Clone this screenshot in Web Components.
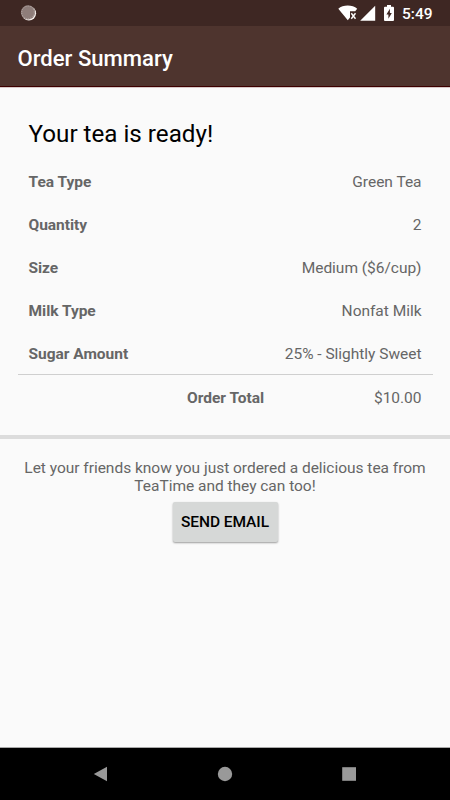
<!DOCTYPE html>
<html lang="en">
<head>
<meta charset="utf-8">
<title>Order Summary</title>
<style>
    body {
        margin: 0;
        background: #fafafa;
        font-family: Roboto, sans-serif;
    }
</style>
</head>
<body>
<tea-screen>
    <status-bar slot="top" time="5:49"></status-bar>
    <app-bar slot="top">Order Summary</app-bar>
    <order-summary heading="Your tea is ready!">
        <order-row label="Tea Type">Green Tea</order-row>
        <order-row label="Quantity">2</order-row>
        <order-row label="Size">Medium ($6/cup)</order-row>
        <order-row label="Milk Type">Nonfat Milk</order-row>
        <order-row label="Sugar Amount">25% - Slightly Sweet</order-row>
        <order-row slot="total" total label="Order Total">$10.00</order-row>
    </order-summary>
    <share-panel action="Send Email">Let your friends know you just ordered a delicious tea from TeaTime and they can too!</share-panel>
    <nav-bar slot="bottom"></nav-bar>
</tea-screen>

<script>
class TeaScreen extends HTMLElement {
    constructor() {
        super();
        this.attachShadow({ mode: 'open' }).innerHTML = `
          <style>
            :host {
                display: flex;
                flex-direction: column;
                height: 800px;
                overflow: hidden;
            }
            main {
                flex: 1;
            }
          </style>
          <slot name="top"></slot>
          <main><slot></slot></main>
          <slot name="bottom"></slot>
        `;
    }
}

class StatusBar extends HTMLElement {
    constructor() {
        super();
        this.attachShadow({ mode: 'open' }).innerHTML = `
          <style>
            :host {
                display: flex;
                align-items: center;
                justify-content: space-between;
                box-sizing: border-box;
                height: 26px;
                padding: 0 17.5px 0 20px;
                background: #3e2723;
                color: #fff;
            }
            svg {
                display: block;
            }
            .system {
                display: flex;
                align-items: center;
            }
            .time {
                margin-left: 7px;
                font-size: 15.5px;
                font-weight: 500;
                line-height: 26px;
                padding-top: 2px;
            }
          </style>
          <svg width="17" height="18" viewBox="0 0 17 18">
            <circle cx="8.9" cy="9.3" r="7.2" fill="#f6f0ed"/>
            <circle cx="8" cy="8.4" r="7.1" fill="#8e7d7a"/>
            <circle cx="8" cy="8.4" r="6.3" fill="none" stroke="#b9aeab" stroke-width="1" stroke-dasharray="1 1.2"/>
          </svg>
          <div class="system">
            <svg width="57" height="26" viewBox="338 0 57 26" fill="#fff">
              <path d="M338.3 8.8C343 4.4 352.5 4.4 357.2 8.8L355.2 11.3H350V17.5L347.8 20.2Z"/>
              <path d="M351.3 13.3L355.5 18.7M355.5 13.3L351.3 18.7" stroke="#fff" stroke-width="1.4"/>
              <path d="M375.2 5.7V20.7H360.2Z"/>
              <path fill-rule="evenodd" d="M387 5H391V6.7H393Q394 6.7 394 7.7V20Q394 21 393 21H385Q384 21 384 20V7.7Q384 6.7 385 6.7H387ZM389.9 8.8L386.4 14.4H388.4V18.8L391.8 13.1H389.9Z"/>
            </svg>
            <span class="time">${this.getAttribute('time')}</span>
          </div>
        `;
    }
}

class AppBar extends HTMLElement {
    constructor() {
        super();
        this.attachShadow({ mode: 'open' }).innerHTML = `
          <style>
            :host {
                display: flex;
                align-items: center;
                box-sizing: border-box;
                height: 62px;
                padding: 2px 17.5px 0;
                border-bottom: 1px solid #d8c8c8;
                background: #4e342e;
                box-shadow: inset 0 -1px #3c0000;
                color: #fff;
                font-size: 22.1px;
                font-weight: 500;
            }
          </style>
          <slot></slot>
        `;
    }
}

class OrderSummary extends HTMLElement {
    constructor() {
        super();
        this.attachShadow({ mode: 'open' }).innerHTML = `
          <style>
            :host {
                display: block;
                padding: 26px 17.5px 17px;
                border-bottom: 4px solid #dcdcdc;
            }
            h1 {
                margin: 0;
                padding-left: 11px;
                color: #000;
                font-size: 24.2px;
                font-weight: 400;
                line-height: 40px;
                height: 34px;
            }
            .rows {
                margin-top: 11px;
                border-bottom: 1px solid #cfcfcf;
            }
          </style>
          <h1>${this.getAttribute('heading')}</h1>
          <div class="rows"><slot></slot></div>
          <slot name="total"></slot>
        `;
    }
}

class OrderRow extends HTMLElement {
    constructor() {
        super();
        this.attachShadow({ mode: 'open' }).innerHTML = `
          <style>
            :host {
                display: grid;
                grid-template-columns: auto 1fr;
                align-items: center;
                box-sizing: border-box;
                height: 43px;
                padding: 3px 11px 0;
                color: #666;
                font-size: 15.5px;
                letter-spacing: -.02px;
            }
            :host([total]) {
                grid-template-columns: 1fr 157.5px;
            }
            :host([total]) .label {
                text-align: right;
            }
            .label {
                font-weight: 700;
            }
            .value {
                text-align: right;
            }
          </style>
          <span class="label">${this.getAttribute('label')}</span>
          <span class="value"><slot></slot></span>
        `;
    }
}

class SharePanel extends HTMLElement {
    constructor() {
        super();
        this.attachShadow({ mode: 'open' }).innerHTML = `
          <style>
            :host {
                display: flex;
                flex-direction: column;
                align-items: center;
                padding: 20px 17.5px 0;
                color: #666;
                font-size: 15.5px;
                letter-spacing: -.02px;
                line-height: 18px;
                text-align: center;
            }
            p {
                margin: 0;
            }
            button {
                width: 105px;
                height: 40px;
                margin-top: 7px;
                padding: 0;
                border: 0;
                border-radius: 2px;
                background: #d6d8d7;
                box-shadow: 0 1px 2px rgba(0, 0, 0, .38);
                color: #000;
                font: 500 15.5px Roboto, sans-serif;
                letter-spacing: -.07px;
                text-transform: uppercase;
            }
          </style>
          <p><slot></slot></p>
          <button>${this.getAttribute('action')}</button>
        `;
    }
}

class NavBar extends HTMLElement {
    constructor() {
        super();
        this.attachShadow({ mode: 'open' }).innerHTML = `
          <style>
            :host {
                display: flex;
                align-items: center;
                justify-content: space-between;
                box-sizing: border-box;
                height: 53px;
                padding: 0 93px;
                border-top: 1px solid #a8a8a8;
                background: #000;
            }
            svg {
                fill: #999;
            }
          </style>
          <svg width="15" height="16" viewBox="0 0 15 16"><path d="M14 .7V15.3L.8 8Z"/></svg>
          <svg width="16" height="16" viewBox="0 0 16 16"><circle cx="8" cy="8" r="7.2"/></svg>
          <svg width="16" height="16" viewBox="0 0 16 16"><rect x="1.2" y="1.2" width="13.8" height="13.6"/></svg>
        `;
    }
}

customElements.define('tea-screen', TeaScreen);
customElements.define('status-bar', StatusBar);
customElements.define('app-bar', AppBar);
customElements.define('order-summary', OrderSummary);
customElements.define('order-row', OrderRow);
customElements.define('share-panel', SharePanel);
customElements.define('nav-bar', NavBar);
</script>
</body>
</html>
